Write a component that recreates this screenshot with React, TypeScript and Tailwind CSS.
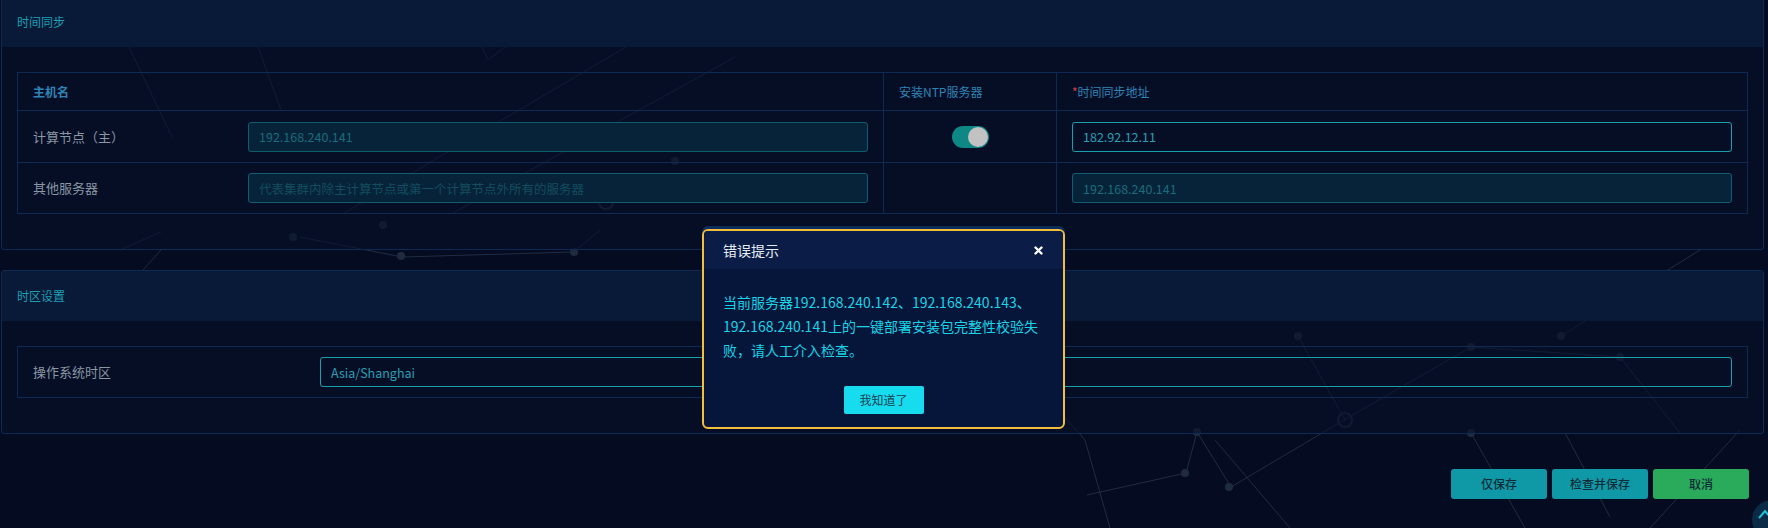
import React from 'react';

const font = { fontFamily: '"Noto Sans CJK SC", "Noto Sans", sans-serif' };

function Backdrop()
{
    // faint network lines behind the panels
    const lines: [number, number, number, number][] = [
        [129, 47, 172, 137], [258, 47, 281, 110], [482, 47, 488, 60], [488, 60, 505, 47],
        [735, 57, 453, 213], [626, 47, 344, 213], [120, 250, 161, 232], [143, 270, 161, 250],
        [300, 237, 402, 257], [402, 257, 574, 252], [574, 252, 600, 230],
        [1087, 495, 1186, 473], [1186, 473, 1197, 432], [1197, 432, 1231, 487], [1231, 487, 1344, 420],
        [1344, 420, 1471, 347], [1471, 433, 1525, 528], [1565, 433, 1610, 517], [1298, 336, 1345, 420],
        [1471, 347, 1620, 357], [1561, 336, 1700, 250], [1620, 357, 1680, 433], [1740, 430, 1650, 528],
        [1040, 390, 1085, 440], [1085, 440, 1110, 528], [1215, 440, 1290, 528],
    ];
    const dots: [number, number][] = [
        [401, 256], [383, 225], [293, 237], [574, 252], [675, 161], [1298, 336], [1561, 336],
        [1471, 347], [1197, 432], [1185, 473], [1229, 487], [1471, 433], [1620, 357],
    ];
    return (
        <svg className="absolute inset-0" width="1768" height="528" viewBox="0 0 1768 528">
            {lines.map((l, i) => (
                <line key={i} x1={l[0]} y1={l[1]} x2={l[2]} y2={l[3]} stroke="#2c3a52" strokeWidth="1" opacity="0.7" />
            ))}
            {dots.map((d, i) => (
                <circle key={i} cx={d[0]} cy={d[1]} r="4" fill="#1f2c40" />
            ))}
            <circle cx="606" cy="202" r="7" fill="none" stroke="#1f2c40" strokeWidth="2" />
            <circle cx="1345" cy="420" r="7" fill="none" stroke="#1f2c40" strokeWidth="2" />
        </svg>
    );
}

function Card({ title, children }: { title: string; children: React.ReactNode })
{
    return (
        <div className="border border-[#0f2a52] rounded-[3px] bg-[#06102a]/60">
            <div className="h-[50px] flex items-center px-[15px] bg-[#091a38] text-[12px] text-[#1d9fb3]">{title}</div>
            <div className="pt-[25px] px-[15px] pb-[35px]">{children}</div>
        </div>
    );
}

function Toggle()
{
    return (
        <div className="w-[37px] h-[22px] rounded-full bg-[#0e8884] flex items-center justify-end pr-px">
            <span className="w-[20px] h-[20px] rounded-full bg-[#c2c2c2]" />
        </div>
    );
}

const disabledInput = "h-[30px] w-full rounded-[3px] border border-[#0e5d6e] bg-[#072339] px-[10px] text-[12.5px] text-[#1b6b7c] placeholder:text-[#124e5e] outline-none";
const activeInput = "h-[30px] w-full rounded-[3px] border border-[#16a0ae] bg-transparent px-[10px] text-[12.5px] text-[#2a9fb2] outline-none";

export default function App()
{
    return (
        <div className="relative w-[1768px] h-[528px] overflow-hidden bg-[#050c22]" style={font}>
            <Backdrop />

            <div className="relative flex flex-col pl-px pr-[4px] -mt-[4px]">
                <Card title="时间同步">
                    <div className="border border-[#0f2a52] text-[13px]">
                        <div className="grid grid-cols-[866px_173px_1fr] h-[38px] border-b border-[#0f2a52] text-[12px] font-semibold text-[#2f84b6]">
                            <div className="flex items-center pl-[15px] border-r border-[#0f2a52]">主机名</div>
                            <div className="flex items-center pl-[15px] border-r border-[#0f2a52] font-normal">安装NTP服务器</div>
                            <div className="flex items-center pl-[15px] font-normal"><span className="text-[#d0443e]">*</span>时间同步地址</div>
                        </div>
                        <div className="grid grid-cols-[866px_173px_1fr] h-[52px] border-b border-[#0f2a52]">
                            <div className="flex items-center pl-[15px] pr-[15px] border-r border-[#0f2a52]">
                                <span className="w-[215px] shrink-0 text-[#8996a4]">计算节点（主）</span>
                                <input readOnly className={disabledInput} value="192.168.240.141" />
                            </div>
                            <div className="flex items-center justify-center border-r border-[#0f2a52]">
                                <Toggle />
                            </div>
                            <div className="flex items-center px-[15px]">
                                <input readOnly className={activeInput} value="182.92.12.11" />
                            </div>
                        </div>
                        <div className="grid grid-cols-[866px_173px_1fr] h-[50px]">
                            <div className="flex items-center pl-[15px] pr-[15px] border-r border-[#0f2a52]">
                                <span className="w-[215px] shrink-0 text-[#8996a4]">其他服务器</span>
                                <input readOnly className={disabledInput} placeholder="代表集群内除主计算节点或第一个计算节点外所有的服务器" />
                            </div>
                            <div className="border-r border-[#0f2a52]" />
                            <div className="flex items-center px-[15px]">
                                <input readOnly className={disabledInput} value="192.168.240.141" />
                            </div>
                        </div>
                    </div>
                </Card>

                <div className="mt-[20px]">
                    <Card title="时区设置">
                        <div className="border border-[#0f2a52] h-[52px] flex items-center pl-[15px] pr-[15px] text-[13px]">
                            <span className="w-[287px] shrink-0 text-[#8996a4]">操作系统时区</span>
                            <input readOnly className={activeInput} value="Asia/Shanghai" />
                        </div>
                    </Card>
                </div>

                <div className="mt-[35px] flex justify-end gap-[5px] pr-[15px]">
                    <button className="w-[96px] h-[30px] rounded-[3px] bg-[#0f98a6] text-[12px] font-medium text-[#0f2c38]">仅保存</button>
                    <button className="w-[96px] h-[30px] rounded-[3px] bg-[#0f98a6] text-[12px] font-medium text-[#0f2c38]">检查并保存</button>
                    <button className="w-[96px] h-[30px] rounded-[3px] bg-[#2aaa5b] text-[12px] font-medium text-[#0f2c38]">取消</button>
                </div>
            </div>

            {/* back to top */}
            <div className="absolute left-[1752px] top-[500px] w-[40px] h-[40px] rounded-full bg-[#0b2a45] flex items-start justify-start pl-[6px] pt-[9px]">
                <svg width="14" height="10" viewBox="0 0 14 10">
                    <path d="M1 9 L7 2 L13 9" fill="none" stroke="#22c3d6" strokeWidth="2" />
                </svg>
            </div>

            {/* error dialog */}
            <div className="absolute left-[702px] top-[229px] w-[363px] h-[200px] rounded-[6px] border-2 border-[#f2be3e] bg-[#06163a] overflow-hidden shadow-[0_-3px_0_0_#0e2c5a]">
                <div className="h-[38px] bg-[#0b1c46] flex items-center justify-between pl-[19px] pr-[20px]">
                    <span className="text-[14px] text-[#e6ecf4]">错误提示</span>
                    <svg width="9" height="9" viewBox="0 0 9 9">
                        <path d="M1.5 1.5 L7.5 7.5 M7.5 1.5 L1.5 7.5" stroke="#ffffff" strokeWidth="2.4" strokeLinecap="round" />
                    </svg>
                </div>
                <div className="pt-[21px] px-[19px] text-[14px] leading-[24px] text-[#19d4e7]">
                    当前服务器192.168.240.142、192.168.240.143、<br />
                    192.168.240.141上的一键部署安装包完整性校验失<br />
                    败，请人工介入检查。
                </div>
                <div className="flex justify-center mt-[24px]">
                    <button className="w-[80px] h-[28px] rounded-[2px] bg-[#17dbee] text-[12px] text-[#1d3f50]">我知道了</button>
                </div>
            </div>
        </div>
    );
}
